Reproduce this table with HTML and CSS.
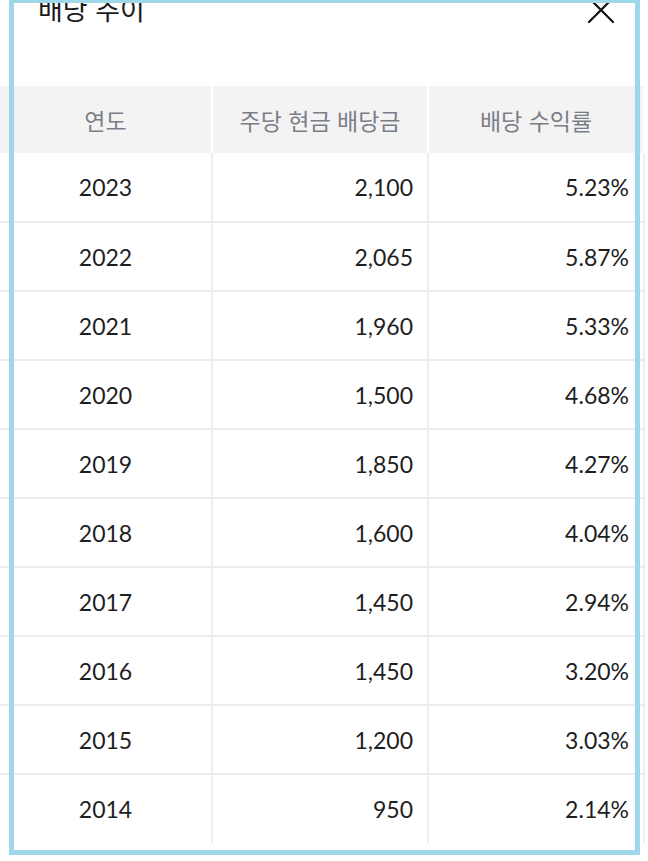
FILE: index.html
```html
<!DOCTYPE html>
<html lang="ko">
<head>
<meta charset="utf-8">
<link rel="stylesheet" href="styles.css">
</head>
<body>
<div class="sheet">
  <div class="modal-head">
    <h2 class="title">배당 추이</h2>
    <button class="close" aria-label="닫기">
      <svg width="28" height="28" viewBox="0 0 28 28"><path d="M2 2 L26 26 M26 2 L2 26" stroke="#111" stroke-width="2.2" fill="none" stroke-linecap="round"/></svg>
    </button>
  </div>
  <table class="div-table">
    <thead>
      <tr><th>연도</th><th>주당 현금 배당금</th><th>배당 수익률</th></tr>
    </thead>
    <tbody>
      <tr><td>2023</td><td>2,100</td><td>5.23%</td></tr>
      <tr><td>2022</td><td>2,065</td><td>5.87%</td></tr>
      <tr><td>2021</td><td>1,960</td><td>5.33%</td></tr>
      <tr><td>2020</td><td>1,500</td><td>4.68%</td></tr>
      <tr><td>2019</td><td>1,850</td><td>4.27%</td></tr>
      <tr><td>2018</td><td>1,600</td><td>4.04%</td></tr>
      <tr><td>2017</td><td>1,450</td><td>2.94%</td></tr>
      <tr><td>2016</td><td>1,450</td><td>3.20%</td></tr>
      <tr><td>2015</td><td>1,200</td><td>3.03%</td></tr>
      <tr><td>2014</td><td>950</td><td>2.14%</td></tr>
    </tbody>
  </table>
  <div class="frame"></div>
</div>
</body>
</html>
```
FILE: styles.css
```css
html, body {
  margin: 0;
  padding: 0;
  background: #ffffff;
  overflow: hidden;
}
body {
  width: 648px;
  height: 861px;
  font-family: Lato, "Noto Sans CJK KR", sans-serif;
  color: #1e1e1e;
}
.sheet {
  position: relative;
  display: flow-root;
  width: 648px;
  height: 861px;
  overflow: hidden;
}
.modal-head {
  margin-top: -8px;
  height: 94px;
  display: flex;
  justify-content: space-between;
  align-items: flex-start;
  padding: 0 33px 0 38px;
  box-sizing: border-box;
}
.title {
  margin: 0;
  font-family: "Noto Sans CJK KR", sans-serif;
  font-weight: 400;
  font-size: 27px;
  line-height: 34px;
  color: #1a1a1a;
}
.close {
  margin: 4px 0 0 0;
  padding: 0;
  border: 0;
  background: none;
  width: 28px;
  height: 28px;
  display: block;
}
.close svg { display: block; }
.div-table {
  border-collapse: collapse;
  table-layout: fixed;
  width: 644px;
}
.div-table th, .div-table td {
  padding: 0 14px;
  box-sizing: border-box;
}
.div-table th:nth-child(1), .div-table td:nth-child(1) { width: 212px; }
.div-table th:nth-child(2), .div-table td:nth-child(2) { width: 216px; }
.div-table th:nth-child(3), .div-table td:nth-child(3) { width: 216px; }
.div-table th {
  height: 67px;
  background: #f3f3f4;
  color: #7a7e87;
  font-family: "Noto Sans CJK KR", sans-serif;
  font-weight: 400;
  font-size: 23px;
  text-align: center;
  border-right: 2px solid #ffffff;
}
.div-table td {
  height: 69px;
  font-size: 23px;
  color: #1e1e1e;
  border-right: 2px solid #eeeeee;
  border-bottom: 2px solid #ececec;
  text-align: right;
}
.div-table td:nth-child(1) { text-align: center; }
.div-table tbody tr:last-child td { border-bottom: 0; }
.frame {
  position: absolute;
  left: 9px;
  top: -2px;
  width: 631px;
  height: 857px;
  border: 5px solid #9ed7e7;
  box-sizing: border-box;
  pointer-events: none;
}
```
